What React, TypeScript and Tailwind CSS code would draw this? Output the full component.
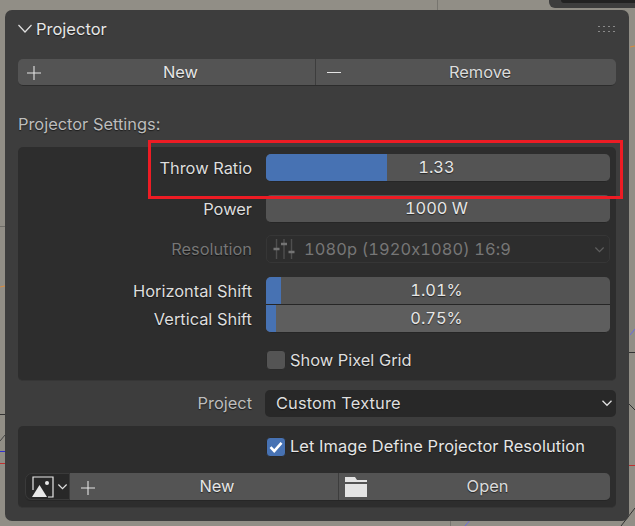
const font = "[font-family:Inter,'Noto_Sans',sans-serif]";
const shadow = "[text-shadow:0_1px_1px_rgba(0,0,0,0.55)]";

const PlusIcon = () => (
  <svg width="14" height="14" viewBox="0 0 14 14" className="shrink-0">
    <path d="M7 0v14M0 7h14" stroke="#e4e4e4" strokeWidth="1.1" />
  </svg>
);

const Chevron = ({ size = 12, color = "#e0e0e0" }: { size?: number; color?: string }) => (
  <svg width={size} height={size} viewBox="0 0 12 12" fill="none" className="shrink-0">
    <path d="M1.5 3.8 6 8.3l4.5-4.5" stroke={color} strokeWidth="1.3" />
  </svg>
);

const FieldLabel = ({ text, dim }: { text: string; dim?: string }) => (
  <div className={`w-[234px] shrink-0 text-right text-[16.4px] leading-none ${dim ?? "text-[#dedede]"} ${shadow}`}>
    {text}
  </div>
);

const Slider = ({
  value,
  fill,
  rounded = "rounded-[5px]",
  bg = "bg-[#545454]",
  extra = "",
}: {
  value: string;
  fill: string;
  rounded?: string;
  bg?: string;
  extra?: string;
}) => (
  <div className={`relative flex h-[28px] w-[344px] items-center justify-center overflow-hidden border-b border-[#262626] pb-[1px] pr-[3px] ${bg} ${rounded} ${extra}`}>
    <div className={`absolute inset-y-0 left-0 bg-[#4772b3] ${fill}`} />
    <span className={`relative text-[16.4px] tabular-nums text-[#e6e6e6] ${shadow}`}>{value}</span>
  </div>
);

const Check = ({ checked }: { checked?: boolean }) => (
  <div
    className={`flex h-[20px] w-[20px] shrink-0 items-center justify-center rounded-[4px] border border-[#2a2a2a] ${
      checked ? "bg-[#4772b3]" : "bg-[#545454]"
    }`}
  >
    {checked && (
      <svg width="14" height="12" viewBox="0 0 14 12" fill="none">
        <path d="M1.5 6.2 5.2 10 12.5 1.8" stroke="#ffffff" strokeWidth="2.6" />
      </svg>
    )}
  </div>
);

const SlidersIcon = () => (
  <svg width="22" height="22" viewBox="0 0 22 22" fill="none" className="shrink-0">
    <path d="M3.5 1v20M11 1v20M18.5 1v20" stroke="#4f4f4f" strokeWidth="1.4" />
    <path d="M0.5 11h6M8 6h6M15.5 14h6" stroke="#747474" strokeWidth="2.6" />
  </svg>
);

const ImageIcon = () => (
  <svg width="22" height="22" viewBox="0 0 22 22" fill="none" className="shrink-0">
    <path d="M1 14V1h20v20h-5" stroke="#e8e8e8" strokeWidth="1.2" />
    <path d="M7.5 9 15 21H0Z" fill="#e8e8e8" />
    <circle cx="15" cy="7" r="2" fill="#e8e8e8" />
  </svg>
);

const FolderIcon = () => (
  <svg width="22" height="20" viewBox="0 0 22 20" className="shrink-0">
    <path d="M0 0h10l2 3h10v2H0Z" fill="#e4e4e4" />
    <path d="M0 7h22v13H0Z" fill="#e4e4e4" />
  </svg>
);

const Backdrop = () => (
  <svg width="635" height="526" className="absolute inset-0" fill="none">
    <path d="M437.5 0v10" stroke="#77756f" />
    <path d="M0 226.5h5" stroke="#6f6d68" />
    <path d="M0 287l5-1" stroke="#d98a3c" />
    <path d="M0 414.5h5" stroke="#333" />
    <path d="M0 441l5-6" stroke="#444" />
    <path d="M0 451.5h5" stroke="#3030d0" />
    <path d="M0 463.5h5" stroke="#c03030" />
    <path d="M630 47l5-1" stroke="#d98a3c" />
    <path d="M630 335l5-6" stroke="#6a6ae0" />
    <path d="M629 352.5h6" stroke="#333" />
    <path d="M629 404l6 6" stroke="#333" />
    <path d="M629 465.5h6" stroke="#c03030" />
    <path d="M621 526l14-18" stroke="#333" />
    <path d="M465 526l6-7" stroke="#6a6ae0" />
    <path d="M450.5 521v5" stroke="#77756f" />
  </svg>
);

export default function App() {
  return (
    <div className={`relative h-[526px] w-[635px] overflow-hidden bg-[#918e86] pl-[5px] pt-[10px] ${font}`}>
      <Backdrop />
      <div className="absolute right-0 top-0 h-[8px] w-[86px] rounded-bl-[6px] bg-[#3d3d3d] pl-[12px]">
        <div className="h-[3px] w-full rounded-bl-[4px] bg-[#222222]" />
      </div>

      <div className="relative h-[511px] w-[624px] rounded-[7px] bg-[#3d3d3d] px-[13px]">
        {/* header */}
        <div className="flex h-[38px] items-center justify-between">
          <div className="flex items-center gap-[4px]">
            <svg width="14" height="10" viewBox="0 0 14 10" fill="none" className="shrink-0">
              <path d="M0.5 1 7 8l6.5-7" stroke="#e0e0e0" strokeWidth="1.2" />
            </svg>
            <span className={`text-[16.5px] leading-none text-[#e6e6e6] ${shadow}`}>Projector</span>
          </div>
          <div className="grid grid-cols-4 gap-x-[3px] gap-y-[4px] pr-[1px]">
            {Array.from({ length: 8 }).map((_, i) => (
              <div key={i} className="h-[1px] w-[2px] bg-[#8a8a8a]" />
            ))}
          </div>
        </div>

        {/* new / remove */}
        <div className="mt-[11px] flex h-[27px] w-[598px] overflow-hidden rounded-[5px] border-b border-[#2c2c2c] bg-[#545454]">
          <div className="relative flex w-[298px] items-center justify-center border-r border-[#3d3d3d] pl-[28px]">
            <div className="absolute left-[9px] top-[7px]">
              <PlusIcon />
            </div>
            <span className={`text-[16.4px] text-[#e6e6e6] ${shadow}`}>New</span>
          </div>
          <div className="relative flex flex-1 items-center justify-center pl-[28px]">
            <div className="absolute left-[11px] top-[13px] h-[1px] w-[14px] bg-[#e4e4e4]" />
            <span className={`text-[16.4px] text-[#dcdcdc] ${shadow}`}>Remove</span>
          </div>
        </div>

        <div className={`mt-[28px] text-[16.4px] leading-[20px] text-[#bdbdbd] ${shadow}`}>
          Projector Settings:
        </div>

        {/* settings box */}
        <div className="mt-[13px] h-[234px] w-[598px] rounded-[5px] border-b border-[#363636] bg-[#2d2d2d] pt-[7px]">
          <div className="flex items-center gap-[14px]">
            <FieldLabel text="Throw Ratio" />
            <Slider value="1.33" fill="w-[121px]" />
          </div>
          <div className="mt-[13px] flex items-center gap-[14px]">
            <FieldLabel text="Power" />
            <Slider value="1000 W" fill="w-0" />
          </div>
          <div className="mt-[12px] flex items-center gap-[14px]">
            <FieldLabel text="Resolution" dim="text-[#767676]" />
            <div className="flex h-[28px] w-[344px] items-center rounded-[5px] border border-[#363636] pl-[6px] pr-[4px]">
              <SlidersIcon />
              <span className="ml-[9px] flex-1 text-[16.4px] tabular-nums tracking-[0.12px] text-[#767676]">1080p (1920x1080) 16:9</span>
              <Chevron size={11} color="#5e5e5e" />
            </div>
          </div>
          <div className="mt-[14px] flex items-center gap-[14px]">
            <FieldLabel text="Horizontal Shift" />
            <Slider value="1.01%" fill="w-[15px]" rounded="rounded-t-[5px]" />
          </div>
          <div className="flex items-center gap-[14px]">
            <FieldLabel text="Vertical Shift" />
            <Slider value="0.75%" fill="w-[10px]" rounded="rounded-b-[5px]" bg="bg-[#5e5e5e]" />
          </div>
          <div className="mt-[17px] flex items-center gap-[4px] pl-[248px]">
            <Check />
            <span className={`text-[16.4px] leading-none text-[#dedede] ${shadow}`}>Show Pixel Grid</span>
          </div>
        </div>

        {/* project */}
        <div className="mt-[9px] flex items-center gap-[13px]">
          <FieldLabel text="Project" dim="text-[#bdbdbd]" />
          <div className="flex h-[27px] w-[351px] items-center rounded-[5px] bg-[#282828] pb-[1px] pl-[11px] pr-[3px]">
            <span className={`flex-1 text-[16.4px] tracking-[0.15px] text-[#dedede] ${shadow}`}>Custom Texture</span>
            <Chevron />
          </div>
        </div>

        {/* texture box */}
        <div className="mt-[9px] h-[82px] w-[598px] rounded-[5px] border-b border-[#363636] bg-[#2d2d2d] pl-[7px] pt-[11px]">
          <div className="flex items-center gap-[4px] pl-[241px]">
            <Check checked />
            <span className={`pb-[1px] text-[16.4px] leading-none tracking-[0.08px] text-[#e6e6e6] ${shadow}`}>
              Let Image Define Projector Resolution
            </span>
          </div>
          <div className="mt-[16px] flex h-[28px] w-[585px] overflow-hidden rounded-[5px] border-b border-[#262626]">
            <div className="flex w-[45px] items-center gap-[3px] rounded-l-[7px] border border-[#3a3a3a] bg-[#282828] pl-[6px]">
              <ImageIcon />
              <Chevron size={11} />
            </div>
            <div className="relative flex w-[269px] items-center justify-center border-r border-[#3d3d3d] bg-[#545454] pl-[26px]">
              <div className="absolute left-[11px] top-[8px]">
                <PlusIcon />
              </div>
              <span className={`text-[16.4px] text-[#e6e6e6] ${shadow}`}>New</span>
            </div>
            <div className="relative flex flex-1 items-center justify-center bg-[#545454] pl-[26px]">
              <div className="absolute left-[6px] top-[4px]">
                <FolderIcon />
              </div>
              <span className={`text-[16.4px] text-[#dcdcdc] ${shadow}`}>Open</span>
            </div>
          </div>
        </div>
      </div>

      {/* annotation */}
      <div className="absolute left-[148px] top-[140px] h-[59px] w-[475px] border-[3px] border-[#ed1c24]" />
    </div>
  );
}
